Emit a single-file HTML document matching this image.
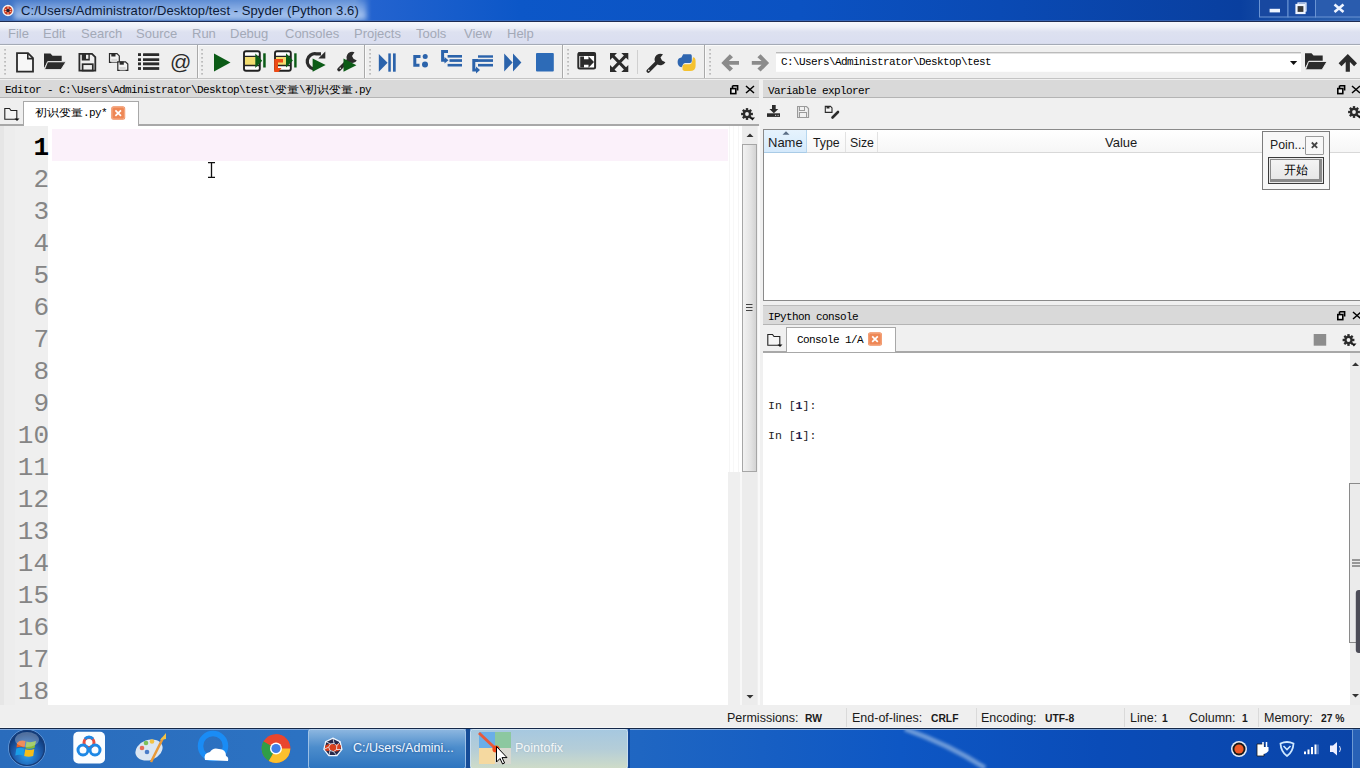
<!DOCTYPE html>
<html><head><meta charset="utf-8">
<style>
*{margin:0;padding:0;box-sizing:border-box}
html,body{width:1360px;height:768px;overflow:hidden;background:#f0f0f0;font-family:"Liberation Sans",sans-serif}
.a{position:absolute}
.mono{font-family:"Liberation Mono",monospace}
.cj{display:inline-block;overflow:hidden;white-space:nowrap;vertical-align:top}
svg{position:absolute;overflow:visible}
</style></head><body>

<!-- TITLE BAR -->
<div class="a" id="title" style="left:0;top:0;width:1360px;height:21px;background:linear-gradient(90deg,#3f74c6 0px,#5586d0 150px,#5e8ed6 355px,#2363cf 372px,#0c57c8 520px,#0b52c2 800px,#0a4ab4 1000px,#093f9f 1240px,#1f55a8 1300px,#2d62b0 1360px)"></div>
<div class="a" style="left:14px;top:1px;width:352px;height:19px;background:linear-gradient(180deg,rgba(140,175,230,0.25) 0,rgba(175,202,242,0.7) 60%,rgba(190,212,245,0.85) 85%,rgba(150,185,235,0.5) 100%);filter:blur(2.5px)"></div>
<div class="a" style="left:0;top:20px;width:1360px;height:1px;background:#4d74b8;opacity:0.6"></div>
<div class="a" style="left:0;top:21px;width:1360px;height:1px;background:#1e2c52"></div>
<svg class="a" style="left:0;top:0" width="1360" height="22">
<circle cx="8" cy="10.5" r="5" fill="#c8381c" stroke="#f4f4f4" stroke-width="1.3"/><path d="M4.5 9 L11.5 12 M11.5 9 L4.5 12 M8 6 V15" stroke="#ffd8c8" stroke-width="0.8"/><circle cx="8" cy="10.5" r="1.8" fill="#2a1a2a"/>
<!-- window buttons -->
<rect x="1259.5" y="-1" width="28.5" height="18" fill="#1848a0" stroke="#6a94d4" stroke-width="1"/>
<rect x="1288" y="-1" width="27.5" height="18" fill="#1a4ca4" stroke="#6a94d4" stroke-width="1"/>
<rect x="1315.5" y="-1" width="45" height="18" fill="#2a5cae" stroke="#6a94d4" stroke-width="1"/>
<rect x="1269.6" y="8.8" width="10.4" height="3.6" fill="#eef4ff"/>
<rect x="1298" y="3" width="8" height="8" fill="none" stroke="#eef4ff" stroke-width="1.2"/>
<rect x="1296.5" y="5" width="8" height="8" fill="#3a3a3a" stroke="#eef4ff" stroke-width="2.2"/>
<path d="M1334.5 4.5 L1343.5 12 M1343.5 4.5 L1334.5 12" stroke="#eef4ff" stroke-width="2.6"/>
</svg>

<!-- MENU BAR -->
<div class="a" id="menubar" style="left:0;top:22px;width:1360px;height:23px;background:linear-gradient(#f6f8fc 0,#eef1f8 5px,#dde1f0 10px,#dadef0 21px,#d4d8e6 22px)"></div>
<div class="a" style="left:0;top:44px;width:1360px;height:1px;background:#a4aab6"></div>

<!-- TOOLBAR -->
<div class="a" id="toolbar" style="left:0;top:45px;width:1360px;height:34px;background:#efefef"></div>
<div class="a" style="left:0;top:45px;width:1360px;height:1px;background:#fbfbfb"></div><div class="a" style="left:0;top:78px;width:1360px;height:1px;background:#c4c4c4"></div>

<!-- EDITOR PANE -->
<div class="a" style="left:0;top:80px;width:759px;height:18px;background:#d9d9d9;border-bottom:1px solid #b4b4b4"></div>
<div class="a" style="left:0;top:99px;width:759px;height:26px;background:#efefef"></div>
<div class="a" style="left:0;top:124px;width:759px;height:2px;background:#a8a8a8"></div>
<div class="a" style="left:0;top:126px;width:742px;height:579px;background:#fff"></div>
<div class="a" style="left:0;top:126px;width:48px;height:579px;background:#efefef"></div>
<div class="a" style="left:4px;top:126px;width:11px;height:579px;background:#ededed"></div><div class="a" style="left:0;top:126px;width:4px;height:579px;background:#e6e6e6"></div>
<div class="a" style="left:52px;top:129px;width:676px;height:31.5px;background:#fbf1fa"></div>
<!-- editor scrollbar -->
<div class="a" style="left:742px;top:126px;width:15px;height:580px;background:#ececec"></div>
<div class="a" style="left:742px;top:144px;width:15px;height:328px;border:1px solid #a6a6a6;background:linear-gradient(90deg,#f2f2f2,#e3e3e3 60%,#d3d3d3)"></div>

<!-- RIGHT PANES -->
<div class="a" style="left:763px;top:80px;width:597px;height:18px;background:#d9d9d9;border-bottom:1px solid #b4b4b4"></div>
<div class="a" style="left:763px;top:129px;width:597px;height:172px;background:#fff;border:1px solid #8a8a8a;border-right:none"></div>
<div class="a" style="left:763px;top:305px;width:597px;height:20px;background:#d9d9d9;border-top:1px solid #bcbcbc;border-bottom:1px solid #b4b4b4"></div>
<div class="a" style="left:763px;top:351px;width:597px;height:2px;background:#a8a8a8"></div>
<div class="a" style="left:763px;top:353px;width:597px;height:353px;background:#fff"></div>
<div class="a" style="left:1350px;top:353px;width:10px;height:353px;background:#ececec"></div>


<!-- scrollbar details -->
<div class="a" style="left:728px;top:472px;width:14px;height:233px;background:#efefef"></div>
<div class="a" style="left:729px;top:126px;width:1px;height:346px;background:#f6f6f6"></div>
<div class="a" style="left:733px;top:126px;width:1px;height:346px;background:#f8f8f8"></div>
<div class="a" style="left:738px;top:126px;width:1px;height:346px;background:#f5f5f5"></div>
<div class="a" style="left:740px;top:472px;width:2px;height:233px;background:#f8f8f8"></div>
<div class="a" style="left:757px;top:126px;width:6px;height:579px;background:#f0f0f0"></div>
<div class="a" style="left:758px;top:126px;width:2px;height:579px;background:#f9f9f9"></div>
<svg class="a" style="left:0;top:0" width="1360" height="768">
<path d="M746.5 137 L750 133.5 L753.5 137 Z" fill="#333"/>
<path d="M746.5 695 L750 698.5 L753.5 695 Z" fill="#333"/>
<path d="M746 304.5 H752.5 M746 307.5 H752.5 M746 310.5 H752.5" stroke="#444" stroke-width="1.2"/>
<!-- console scrollbar -->
<path d="M1352 366 L1355.5 362.5 L1359 366 Z" fill="#333"/>
<path d="M1352 694 L1355.5 697.5 L1359 694 Z" fill="#333"/>
<rect x="1349.5" y="483.5" width="12" height="159" fill="#ebebeb" stroke="#8a8a8a" stroke-width="1"/>
<path d="M1352 560 H1360 M1352 563 H1360 M1352 566 H1360" stroke="#444" stroke-width="1.2"/>
<rect x="1355.8" y="590" width="8" height="63" rx="3" fill="#4d4d58"/>
</svg>

<!-- STATUS BAR -->
<div class="a" style="left:0;top:705px;width:1360px;height:23px;background:#efefef"></div>

<!-- TASKBAR -->
<div class="a" id="taskbar" style="left:0;top:729px;width:1360px;height:39px;background:linear-gradient(90deg,#2a6cbc 0,#2c72c2 300px,#1f66c2 640px,#0e57c4 900px,#0a4cb8 1100px,#0a44a8 1360px)"></div>




<svg class="a" style="left:0;top:0" width="1360" height="768" viewBox="0 0 1360 768">
<rect x="4.25" y="49" width="1.6" height="1.6" fill="#b4b4b4"/><rect x="4.25" y="53" width="1.6" height="1.6" fill="#b4b4b4"/><rect x="4.25" y="57" width="1.6" height="1.6" fill="#b4b4b4"/><rect x="4.25" y="61" width="1.6" height="1.6" fill="#b4b4b4"/><rect x="4.25" y="65" width="1.6" height="1.6" fill="#b4b4b4"/><rect x="4.25" y="69" width="1.6" height="1.6" fill="#b4b4b4"/><rect x="4.25" y="73" width="1.6" height="1.6" fill="#b4b4b4"/><rect x="201.25" y="49" width="1.6" height="1.6" fill="#b4b4b4"/><rect x="201.25" y="53" width="1.6" height="1.6" fill="#b4b4b4"/><rect x="201.25" y="57" width="1.6" height="1.6" fill="#b4b4b4"/><rect x="201.25" y="61" width="1.6" height="1.6" fill="#b4b4b4"/><rect x="201.25" y="65" width="1.6" height="1.6" fill="#b4b4b4"/><rect x="201.25" y="69" width="1.6" height="1.6" fill="#b4b4b4"/><rect x="201.25" y="73" width="1.6" height="1.6" fill="#b4b4b4"/><rect x="369.25" y="49" width="1.6" height="1.6" fill="#b4b4b4"/><rect x="369.25" y="53" width="1.6" height="1.6" fill="#b4b4b4"/><rect x="369.25" y="57" width="1.6" height="1.6" fill="#b4b4b4"/><rect x="369.25" y="61" width="1.6" height="1.6" fill="#b4b4b4"/><rect x="369.25" y="65" width="1.6" height="1.6" fill="#b4b4b4"/><rect x="369.25" y="69" width="1.6" height="1.6" fill="#b4b4b4"/><rect x="369.25" y="73" width="1.6" height="1.6" fill="#b4b4b4"/><rect x="567.25" y="49" width="1.6" height="1.6" fill="#b4b4b4"/><rect x="567.25" y="53" width="1.6" height="1.6" fill="#b4b4b4"/><rect x="567.25" y="57" width="1.6" height="1.6" fill="#b4b4b4"/><rect x="567.25" y="61" width="1.6" height="1.6" fill="#b4b4b4"/><rect x="567.25" y="65" width="1.6" height="1.6" fill="#b4b4b4"/><rect x="567.25" y="69" width="1.6" height="1.6" fill="#b4b4b4"/><rect x="567.25" y="73" width="1.6" height="1.6" fill="#b4b4b4"/><rect x="709.25" y="49" width="1.6" height="1.6" fill="#b4b4b4"/><rect x="709.25" y="53" width="1.6" height="1.6" fill="#b4b4b4"/><rect x="709.25" y="57" width="1.6" height="1.6" fill="#b4b4b4"/><rect x="709.25" y="61" width="1.6" height="1.6" fill="#b4b4b4"/><rect x="709.25" y="65" width="1.6" height="1.6" fill="#b4b4b4"/><rect x="709.25" y="69" width="1.6" height="1.6" fill="#b4b4b4"/><rect x="709.25" y="73" width="1.6" height="1.6" fill="#b4b4b4"/>
<rect x="197" y="45" width="1" height="33" fill="#a9a9a9"/><rect x="198" y="45" width="1" height="33" fill="#fafafa"/><rect x="364" y="45" width="1" height="33" fill="#a9a9a9"/><rect x="365" y="45" width="1" height="33" fill="#fafafa"/><rect x="562" y="45" width="1" height="33" fill="#a9a9a9"/><rect x="563" y="45" width="1" height="33" fill="#fafafa"/><rect x="704" y="45" width="1" height="33" fill="#a9a9a9"/><rect x="705" y="45" width="1" height="33" fill="#fafafa"/>
<rect x="637" y="50" width="1" height="24" fill="#d0d0d0"/>
<!-- new file -->
<path d="M17 53.2 H28 L33 58.2 V71.6 H17 Z" fill="#fff" fill-opacity="0.5" stroke="#2b2b2b" stroke-width="1.8" stroke-linejoin="miter"/>
<path d="M27.8 53.2 V58.6 H33" fill="none" stroke="#2b2b2b" stroke-width="1.6"/>
<!-- open folder -->
<path d="M44 53.5 H50.5 L52.5 55.8 H61.7 V61 H48 L44 68 Z" fill="#2b2b2b"/>
<path d="M47.5 61.8 H66 L61 69.6 H44.5 Z" fill="#2b2b2b" stroke="#efefef" stroke-width="0.9"/>
<!-- save -->
<path d="M79.4 53.9 H92 L95.3 57.2 V70.6 H79.4 Z" fill="none" stroke="#2b2b2b" stroke-width="1.8"/>
<rect x="81.8" y="53.5" width="8" height="7" fill="#2b2b2b"/><rect x="86" y="54.8" width="2.4" height="4" fill="#efefef"/>
<rect x="82.6" y="64.2" width="10.2" height="6.4" fill="none" stroke="#2b2b2b" stroke-width="1.7"/>
<!-- save all -->
<path d="M109.5 53.6 H117 L119.3 55.9 V62.4 H109.5 Z" fill="#f4f4f4" stroke="#2b2b2b" stroke-width="1.2"/>
<rect x="111.3" y="53.3" width="4.2" height="3.2" fill="#2b2b2b"/>
<rect x="111.3" y="58.8" width="6" height="3.6" fill="#d8d8d8"/>
<path d="M117.8 61.8 H125.5 L127.8 64.1 V70.4 H117.8 Z" fill="#f4f4f4" stroke="#2b2b2b" stroke-width="1.2"/>
<rect x="119.6" y="61.5" width="4.2" height="3.2" fill="#2b2b2b"/>
<rect x="119.6" y="67" width="6" height="3.4" fill="#d8d8d8"/>
<!-- list -->
<rect x="138" y="53.2" width="3" height="2.8" fill="#2b2b2b"/><rect x="143" y="53.2" width="16.2" height="2.8" fill="#2b2b2b" rx="0.5"/>
<rect x="138" y="58.3" width="3" height="2.7" fill="#2b2b2b"/><rect x="143" y="58.3" width="16.2" height="2.7" fill="#2b2b2b"/>
<rect x="138" y="62.4" width="3" height="2.9" fill="#2b2b2b"/><rect x="143" y="62.4" width="16.2" height="2.9" fill="#2b2b2b"/>
<rect x="138" y="67.1" width="3" height="2.8" fill="#2b2b2b"/><rect x="143" y="67.1" width="16.2" height="2.8" fill="#2b2b2b"/>
<!-- @ -->
<text x="170" y="69" font-family="Liberation Sans" font-size="21" fill="#2b2b2b">@</text>
<!-- run -->
<path d="M214 53.6 L230.5 62.5 L214 71.5 Z" fill="#0b5b16"/>
<!-- run cell -->
<rect x="244" y="51.2" width="15.8" height="19.6" rx="2" fill="#fff" stroke="#222" stroke-width="1.9"/>
<rect x="245" y="57" width="11" height="8" fill="#f2dd70"/>
<path d="M244 56.4 H259.8 M244 65.5 H259.8" stroke="#222" stroke-width="1.4"/>
<path d="M255.3 53.6 L262.2 60.7 L255.3 67.9 Z" fill="#0b5b16"/>
<rect x="263.2" y="53.3" width="2.5" height="14.2" fill="#0b5b16"/>
<!-- run cell advance -->
<rect x="275" y="51.2" width="15.8" height="19.6" rx="2" fill="#fff" stroke="#222" stroke-width="1.9"/>
<rect x="276" y="57" width="11" height="8" fill="#f2dd70"/>
<path d="M275 56.4 H290.8 M275 65.5 H290.8" stroke="#222" stroke-width="1.4"/>
<path d="M274.2 59 H283 V62.4 H278 V68 H281.5 L278.5 72 H274.2 Z" fill="#ee4a14"/>
<path d="M286 53.3 L292.9 60.4 L286 67.5 Z" fill="#0b5b16"/>
<rect x="294.2" y="53.3" width="2.4" height="14.2" fill="#0b5b16"/>
<!-- rerun -->
<path d="M321 53.8 H316.2 A7.6 7.6 0 0 0 313.5 68.8" fill="none" stroke="#2b2b2b" stroke-width="3.3"/>
<path d="M325.3 51.6 V58.6 H318.3 Z" fill="#2b2b2b"/>
<path d="M312.6 58.4 L325.6 65.1 L312.6 71.8 Z" fill="#0b5b16"/>
<!-- run selection -->
<path d="M339 69.5 L347.5 61" stroke="#2b2b2b" stroke-width="3.6" stroke-linecap="round"/>
<circle cx="340.3" cy="68.2" r="0.8" fill="#e8e8e8"/>
<path d="M354.5 52.3 A5.6 5.6 0 1 0 356.8 60.5 L353.5 58.8 L352 56 Z" fill="#2b2b2b"/>
<path d="M343.5 58.6 L356.4 65.2 L343.5 71.8 Z" fill="#0b5b16"/>
<!-- debug -->
<path d="M378.8 54 L387.6 62.85 L378.8 71.7 Z" fill="#2b63ab"/>
<rect x="388.3" y="53.4" width="2.5" height="18.3" fill="#2b63ab"/><rect x="393" y="53.4" width="2.7" height="18.3" fill="#2b63ab"/>
<!-- step -->
<path d="M420.5 56.6 H414.8 V65.2 H419.5" fill="none" stroke="#2b63ab" stroke-width="3"/>
<circle cx="425.2" cy="56.6" r="2.5" fill="#2b63ab"/><circle cx="425" cy="64.6" r="3" fill="#2b63ab"/>
<!-- step into -->
<path d="M448 51.5 H442.6 V60.3 H445" fill="none" stroke="#2b63ab" stroke-width="3"/>
<path d="M444.5 57 L448.5 60.3 L444.5 63.6 Z" fill="#2b63ab"/>
<rect x="447.6" y="55" width="14.4" height="2.6" fill="#2b63ab"/><rect x="449.5" y="59.2" width="12.5" height="2.7" fill="#2b63ab"/><rect x="447.6" y="63.9" width="14.4" height="2.6" fill="#2b63ab"/>
<!-- step return -->
<rect x="478" y="55.3" width="15" height="2.4" fill="#2b63ab"/><rect x="478" y="59.2" width="15" height="2.7" fill="#2b63ab"/><rect x="478" y="63.9" width="15" height="2.6" fill="#2b63ab"/>
<path d="M478 60.5 H473.8 V70 H476.5" fill="none" stroke="#2b63ab" stroke-width="3"/>
<path d="M476 66.5 L480 70 L476 73.5 Z" fill="#2b63ab"/>
<!-- continue -->
<path d="M504.2 53.6 L512.6 62.5 L504.2 71.5 Z M513 53.6 L521.4 62.5 L513 71.5 Z" fill="#2b63ab"/>
<!-- stop -->
<rect x="536" y="53" width="17.8" height="18.5" rx="1" fill="#2d6bb7"/>
<!-- maximize pane -->
<rect x="578.3" y="53" width="16.8" height="15.6" rx="1.5" fill="#fff" stroke="#2b2b2b" stroke-width="2"/>
<rect x="578" y="52.5" width="17.5" height="3.5" fill="#2b2b2b"/>
<rect x="580.2" y="56.5" width="3.8" height="11" fill="#2b2b2b"/>
<path d="M584 59.3 H588.5 V56.3 L594 62 L588.5 67.7 V64.7 H584 Z" fill="#2b2b2b"/>
<!-- fullscreen -->
<path d="M612.5 55.5 L626 69.5 M626 55.5 L612.5 69.5" stroke="#2b2b2b" stroke-width="3.2"/>
<path d="M610 53 H617 L610 60 Z M628.3 53 H621.3 L628.3 60 Z M610 72 H617 L610 65 Z M628.3 72 H621.3 L628.3 65 Z" fill="#2b2b2b"/>
<!-- wrench -->
<path d="M648.3 71 L656.8 62.5" stroke="#2b2b2b" stroke-width="3.8" stroke-linecap="round"/>
<path d="M663 54.3 A5.8 5.8 0 1 0 665.4 62.3 L662 60.6 L660.5 57.6 Z" fill="#2b2b2b"/>
<circle cx="648.8" cy="70.4" r="0.8" fill="#e8e8e8"/>
<!-- python -->
<path d="M686 71 H690 Q695.6 71 695.6 66 V61 Q695.6 57.6 693 57.3 L692 62 Q691.5 64.2 689.5 64.2 H684.5 Q683 64.2 682.5 65.7 V69 Q682.5 71 686 71 Z" fill="#f5c230"/>
<path d="M683.2 54.2 H690.6 Q691.8 54.2 691.8 56 V61 Q691.8 63 689.8 63 H685 Q683.6 63 683 64.5 L681.6 67.2 Q677.6 66.6 677.6 62 Q677.6 57.8 681.4 57.4 Z" fill="#2f66b0"/>
<!-- back/forward -->
<path d="M721.3 62.9 L729.8 54.2 L733 57.3 L728.8 61 H739 V64.8 H728.8 L733 68.5 L729.8 71.6 Z" fill="#8b8b8b"/>
<path d="M769.1 62.9 L760.6 54.2 L757.4 57.3 L761.6 61 H751.8 V64.8 H761.6 L757.4 68.5 L760.6 71.6 Z" fill="#8b8b8b"/>
<!-- combobox -->
<rect x="776" y="52.3" width="525" height="19.5" fill="#fff"/>
<rect x="776" y="52.3" width="525" height="1" fill="#a0a0a0"/>
<path d="M1290 61 H1297.2 L1293.6 65 Z" fill="#111"/>
<!-- folder right -->
<path d="M1305 53.2 H1311.5 L1313.5 55.5 H1322.7 V60.7 H1309 L1305 67.7 Z" fill="#2b2b2b"/>
<path d="M1308.5 61.5 H1327 L1322 69.8 H1305.5 Z" fill="#2b2b2b" stroke="#efefef" stroke-width="0.9"/>
<!-- up arrow -->
<path d="M1347.8 54 L1357 63.3 L1354.1 66.2 L1349.9 62 V71.8 H1345.7 V62 L1341.5 66.2 L1338.6 63.3 Z" fill="#2b2b2b"/>
</svg>


<svg class="a" style="left:0;top:0" width="1360" height="768" viewBox="0 0 1360 768">
<!-- pane header icons -->
<path d="M732.5 85.8 H737.6 V90.5 M732.5 85.8 V88" fill="none" stroke="#000" stroke-width="1.6"/><rect x="730.8" y="88.6" width="5" height="5" fill="#eee" stroke="#000" stroke-width="1.6"/><path d="M746 86 L754 93 M754 86 L746 93" stroke="#000" stroke-width="1.5"/>
<path d="M1339.5 85.8 H1344.6 V90.5 M1339.5 85.8 V88" fill="none" stroke="#000" stroke-width="1.6"/><rect x="1337.8" y="88.6" width="5" height="5" fill="#eee" stroke="#000" stroke-width="1.6"/><path d="M1352 86 L1360 93 M1360 86 L1352 93" stroke="#000" stroke-width="1.5"/>
<path d="M1339.5 311.8 H1344.6 V316.5 M1339.5 311.8 V314" fill="none" stroke="#000" stroke-width="1.6"/><rect x="1337.8" y="314.6" width="5" height="5" fill="#eee" stroke="#000" stroke-width="1.6"/><path d="M1353 312 L1361 319 M1361 312 L1353 319" stroke="#000" stroke-width="1.5"/>
<!-- gears -->
<circle cx="747" cy="114" r="4.2" fill="#2b2b2b"/><line x1="747" y1="114" x2="752.90" y2="114.00" stroke="#2b2b2b" stroke-width="2.4"/><line x1="747" y1="114" x2="751.17" y2="118.17" stroke="#2b2b2b" stroke-width="2.4"/><line x1="747" y1="114" x2="747.00" y2="119.90" stroke="#2b2b2b" stroke-width="2.4"/><line x1="747" y1="114" x2="742.83" y2="118.17" stroke="#2b2b2b" stroke-width="2.4"/><line x1="747" y1="114" x2="741.10" y2="114.00" stroke="#2b2b2b" stroke-width="2.4"/><line x1="747" y1="114" x2="742.83" y2="109.83" stroke="#2b2b2b" stroke-width="2.4"/><line x1="747" y1="114" x2="747.00" y2="108.10" stroke="#2b2b2b" stroke-width="2.4"/><line x1="747" y1="114" x2="751.17" y2="109.83" stroke="#2b2b2b" stroke-width="2.4"/><circle cx="747" cy="114" r="1.9" fill="#efefef"/><path d="M749.8 117.6 H755 L752.4 120.6 Z" fill="#111"/><circle cx="1354" cy="112" r="4.2" fill="#2b2b2b"/><line x1="1354" y1="112" x2="1359.90" y2="112.00" stroke="#2b2b2b" stroke-width="2.4"/><line x1="1354" y1="112" x2="1358.17" y2="116.17" stroke="#2b2b2b" stroke-width="2.4"/><line x1="1354" y1="112" x2="1354.00" y2="117.90" stroke="#2b2b2b" stroke-width="2.4"/><line x1="1354" y1="112" x2="1349.83" y2="116.17" stroke="#2b2b2b" stroke-width="2.4"/><line x1="1354" y1="112" x2="1348.10" y2="112.00" stroke="#2b2b2b" stroke-width="2.4"/><line x1="1354" y1="112" x2="1349.83" y2="107.83" stroke="#2b2b2b" stroke-width="2.4"/><line x1="1354" y1="112" x2="1354.00" y2="106.10" stroke="#2b2b2b" stroke-width="2.4"/><line x1="1354" y1="112" x2="1358.17" y2="107.83" stroke="#2b2b2b" stroke-width="2.4"/><circle cx="1354" cy="112" r="1.9" fill="#efefef"/><path d="M1356.8 115.6 H1362 L1359.4 118.6 Z" fill="#111"/><circle cx="1348.5" cy="340" r="4.2" fill="#2b2b2b"/><line x1="1348.5" y1="340" x2="1354.40" y2="340.00" stroke="#2b2b2b" stroke-width="2.4"/><line x1="1348.5" y1="340" x2="1352.67" y2="344.17" stroke="#2b2b2b" stroke-width="2.4"/><line x1="1348.5" y1="340" x2="1348.50" y2="345.90" stroke="#2b2b2b" stroke-width="2.4"/><line x1="1348.5" y1="340" x2="1344.33" y2="344.17" stroke="#2b2b2b" stroke-width="2.4"/><line x1="1348.5" y1="340" x2="1342.60" y2="340.00" stroke="#2b2b2b" stroke-width="2.4"/><line x1="1348.5" y1="340" x2="1344.33" y2="335.83" stroke="#2b2b2b" stroke-width="2.4"/><line x1="1348.5" y1="340" x2="1348.50" y2="334.10" stroke="#2b2b2b" stroke-width="2.4"/><line x1="1348.5" y1="340" x2="1352.67" y2="335.83" stroke="#2b2b2b" stroke-width="2.4"/><circle cx="1348.5" cy="340" r="1.9" fill="#efefef"/><path d="M1351.3 343.6 H1356.5 L1353.9 346.6 Z" fill="#111"/>
<!-- tab folders -->
<path d="M4.8 108.5 H9.5 L11 110.5 H16.8 V119.3 H4.8 Z" fill="#f4f4f4" stroke="#222" stroke-width="1.1"/><path d="M14.5 118.5 H19.5 L17 121.1 Z" fill="#111"/><path d="M767.8 334.5 H772.5 L774 336.5 H779.8 V345.3 H767.8 Z" fill="#f4f4f4" stroke="#222" stroke-width="1.1"/><path d="M777.5 344.5 H782.5 L780 347.1 Z" fill="#111"/>
<!-- console stop -->
<rect x="1313.7" y="334" width="12.5" height="11.7" fill="#8d8d8d"/>
<!-- var explorer toolbar -->
<path d="M772 105 H775.7 V109 H778.3 L773.85 113.2 L769.4 109 H772 Z" fill="#2b2b2b"/>
<rect x="767" y="113.3" width="13" height="3.6" fill="#2b2b2b"/>
<rect x="775" y="114.8" width="1.2" height="1.2" fill="#bbb"/><rect x="777.5" y="114.8" width="1.2" height="1.2" fill="#bbb"/>
<path d="M797.6 106.5 H806.5 L808.5 108.5 V117.5 H797.6 Z" fill="none" stroke="#9a9a9a" stroke-width="1.2"/>
<rect x="799.5" y="106.5" width="5" height="4" fill="none" stroke="#9a9a9a" stroke-width="1"/>
<rect x="799.5" y="112.5" width="7" height="5" fill="none" stroke="#9a9a9a" stroke-width="1"/>
<path d="M825.3 106.4 H830.5 L832 107.9 V112.4 H825.3 Z" fill="#f4f4f4" stroke="#2b2b2b" stroke-width="1.1"/>
<rect x="826.5" y="106" width="3" height="2.5" fill="#2b2b2b"/>
<path d="M832.5 117.5 L838 112" stroke="#2b2b2b" stroke-width="2.6" stroke-linecap="round"/>
</svg>

<!-- TEXT LAYER -->
<div class="a" style="left:21px;top:4px;font-size:13px;line-height:13px;color:#0c1a36;white-space:nowrap;letter-spacing:0.07px">C:/Users/Administrator/Desktop/test - Spyder (Python 3.6)</div>

<div class="a" id="menu" style="left:0;top:27px;font-size:13px;line-height:13px;color:#a3a9b7;white-space:nowrap">
<span class="a" style="left:8px">File</span><span class="a" style="left:43px">Edit</span><span class="a" style="left:81px">Search</span><span class="a" style="left:136px">Source</span><span class="a" style="left:192px">Run</span><span class="a" style="left:230px">Debug</span><span class="a" style="left:285px">Consoles</span><span class="a" style="left:354px">Projects</span><span class="a" style="left:416px">Tools</span><span class="a" style="left:464px">View</span><span class="a" style="left:507px">Help</span>
</div>

<div class="a mono" style="left:5px;top:85px;font-size:11px;line-height:11px;letter-spacing:-0.6px;color:#000;white-space:nowrap">Editor - C:\Users\Administrator\Desktop\test\<span class="cj" style="width:24px;font-size:12px;letter-spacing:0">变量</span>\<span class="cj" style="width:48px;font-size:12px;letter-spacing:0">初识变量</span>.py</div>

<div class="a mono" style="left:768px;top:86px;font-size:11px;line-height:11px;letter-spacing:-0.6px;color:#000;white-space:nowrap">Variable explorer</div>
<div class="a mono" style="left:768px;top:312px;font-size:11px;line-height:11px;letter-spacing:-0.6px;color:#000;white-space:nowrap">IPython console</div>

<!-- status bar text -->
<div class="a" style="left:0;top:712px;font-size:12.5px;line-height:12.5px;color:#1a1a1a;white-space:nowrap">
<span class="a" style="left:727px">Permissions:</span><span class="a" style="left:805px;font-weight:bold;font-size:10.3px;top:0.5px">RW</span>
<span class="a" style="left:852px">End-of-lines:</span><span class="a" style="left:931px;font-weight:bold;font-size:10.3px;top:0.5px">CRLF</span>
<span class="a" style="left:981px">Encoding:</span><span class="a" style="left:1045px;font-weight:bold;font-size:10.3px;top:0.5px">UTF-8</span>
<span class="a" style="left:1130px">Line:</span><span class="a" style="left:1162px;font-weight:bold;font-size:10.3px;top:0.5px">1</span>
<span class="a" style="left:1189px">Column:</span><span class="a" style="left:1242px;font-weight:bold;font-size:10.3px;top:0.5px">1</span>
<span class="a" style="left:1264px">Memory:</span><span class="a" style="left:1321px;font-weight:bold;font-size:10.3px;top:0.5px">27 %</span>
</div>

<!-- line numbers -->
<div class="a mono" style="left:0;width:49px;text-align:right;top:131.6px;font-size:26px;line-height:32px;font-weight:bold;color:#000">1</div><div class="a mono" style="left:0;width:49px;text-align:right;top:163.6px;font-size:26px;line-height:32px;color:#858585">2</div><div class="a mono" style="left:0;width:49px;text-align:right;top:195.6px;font-size:26px;line-height:32px;color:#858585">3</div><div class="a mono" style="left:0;width:49px;text-align:right;top:227.6px;font-size:26px;line-height:32px;color:#858585">4</div><div class="a mono" style="left:0;width:49px;text-align:right;top:259.6px;font-size:26px;line-height:32px;color:#858585">5</div><div class="a mono" style="left:0;width:49px;text-align:right;top:291.6px;font-size:26px;line-height:32px;color:#858585">6</div><div class="a mono" style="left:0;width:49px;text-align:right;top:323.6px;font-size:26px;line-height:32px;color:#858585">7</div><div class="a mono" style="left:0;width:49px;text-align:right;top:355.6px;font-size:26px;line-height:32px;color:#858585">8</div><div class="a mono" style="left:0;width:49px;text-align:right;top:387.6px;font-size:26px;line-height:32px;color:#858585">9</div><div class="a mono" style="left:0;width:49px;text-align:right;top:419.6px;font-size:26px;line-height:32px;color:#858585">10</div><div class="a mono" style="left:0;width:49px;text-align:right;top:451.6px;font-size:26px;line-height:32px;color:#858585">11</div><div class="a mono" style="left:0;width:49px;text-align:right;top:483.6px;font-size:26px;line-height:32px;color:#858585">12</div><div class="a mono" style="left:0;width:49px;text-align:right;top:515.6px;font-size:26px;line-height:32px;color:#858585">13</div><div class="a mono" style="left:0;width:49px;text-align:right;top:547.6px;font-size:26px;line-height:32px;color:#858585">14</div><div class="a mono" style="left:0;width:49px;text-align:right;top:579.6px;font-size:26px;line-height:32px;color:#858585">15</div><div class="a mono" style="left:0;width:49px;text-align:right;top:611.6px;font-size:26px;line-height:32px;color:#858585">16</div><div class="a mono" style="left:0;width:49px;text-align:right;top:643.6px;font-size:26px;line-height:32px;color:#858585">17</div><div class="a mono" style="left:0;width:49px;text-align:right;top:675.6px;font-size:26px;line-height:32px;color:#858585">18</div>
<!-- mouse I-beam -->
<svg class="a" style="left:0;top:0" width="1360" height="768"><path d="M208 162.6 H215 M208 177.4 H215 M211.5 162.6 V177.4" fill="none" stroke="#111" stroke-width="1.3"/></svg>

<!-- editor tab -->
<div class="a" style="left:23px;top:101px;width:116px;height:25px;background:#fff;border:1px solid #a8a8a8;border-bottom:none"></div>
<div class="a mono" style="left:35px;top:108px;font-size:11px;line-height:11px;letter-spacing:-0.6px;color:#000;white-space:nowrap"><span class="cj" style="width:48px;font-size:12px;letter-spacing:0">初识变量</span>.py*</div>

<!-- console tab -->
<div class="a" style="left:786px;top:327px;width:110px;height:25px;background:#fff;border:1px solid #a8a8a8;border-bottom:none"></div>
<div class="a mono" style="left:797px;top:335px;font-size:11px;line-height:11px;letter-spacing:-0.6px;color:#000;white-space:nowrap">Console 1/A</div>

<!-- var table header -->
<div class="a" style="left:764px;top:130px;width:596px;height:23px;background:linear-gradient(#ffffff,#f6f6f6);border-bottom:1px solid #d8d8d8"></div>
<div class="a" style="left:764px;top:130px;width:43px;height:23px;background:linear-gradient(#e6f3fd,#d4e9fb);border-right:1px solid #b6d6ee;border-bottom:1px solid #a9cbe6"></div>
<div class="a" style="left:845px;top:132px;width:1px;height:20px;background:#e2e2e2"></div>
<div class="a" style="left:877px;top:132px;width:1px;height:20px;background:#e2e2e2"></div>
<svg class="a" style="left:0;top:0" width="1360" height="768"><path d="M782.5 134.8 L786 131.3 L789.5 134.8 Z" fill="#5a6e86"/></svg>
<div class="a" style="left:0;top:136px;font-size:13px;line-height:13px;color:#1a1a1a;white-space:nowrap">
<span class="a" style="left:768px">Name</span><span class="a" style="left:813px;top:0.8px;font-size:12.3px">Type</span><span class="a" style="left:850px;top:0.8px;font-size:12.3px">Size</span><span class="a" style="left:1105px">Value</span>
</div>

<!-- pointofix popup -->
<div class="a" style="left:1262px;top:131px;width:68px;height:59px;background:#f7f7f7;border:1px solid #7c7c7c"></div>
<div class="a" style="left:1270px;top:139px;font-size:12.3px;line-height:13px;color:#222;white-space:nowrap">Poin...</div>
<div class="a" style="left:1305px;top:136px;width:19px;height:19px;border:1px solid #9a9a9a;border-radius:1px;background:#f8f8f8"></div>
<svg class="a" style="left:0;top:0" width="1360" height="768"><path d="M1311.8 142.5 L1317.2 147.8 M1317.2 142.5 L1311.8 147.8" stroke="#444" stroke-width="1.8"/></svg>
<div class="a" style="left:1268px;top:157px;width:56px;height:27px;border:1px solid #3a3a3a;background:#e8e8e8"></div>
<div class="a" style="left:1270px;top:159px;width:52px;height:23px;border:1px solid #8a8a8a;background:linear-gradient(#f4f4f4,#e6e6e6);box-shadow:inset -2px -2px 0 #8a8a8a"></div>
<div class="a" style="left:1284px;top:164px;font-size:12px;line-height:13px;color:#000;white-space:nowrap"><span class="cj" style="width:24px">开始</span></div>

<!-- console text -->
<div class="a mono" style="left:768px;top:398.5px;font-size:11.5px;line-height:13px;color:#222;white-space:nowrap">In [<b style="color:#1c1c4c">1</b>]:</div>
<div class="a mono" style="left:768px;top:428.5px;font-size:11.5px;line-height:13px;color:#222;white-space:nowrap">In [<b style="color:#1c1c4c">1</b>]:</div>

<!-- status separators -->
<div class="a" style="left:846px;top:708px;width:1px;height:19px;background:#dadada"></div>
<div class="a" style="left:976px;top:708px;width:1px;height:19px;background:#dadada"></div>
<div class="a" style="left:1124px;top:708px;width:1px;height:19px;background:#dadada"></div>
<div class="a" style="left:1258px;top:708px;width:1px;height:19px;background:#dadada"></div>

<!-- combobox text -->
<div class="a mono" style="left:781px;top:57px;font-size:11px;line-height:11px;letter-spacing:-0.6px;color:#000;white-space:nowrap">C:\Users\Administrator\Desktop\test</div>

<svg class="a" style="left:0;top:0" width="1360" height="768"><rect x="111.2" y="106.3" width="14" height="13.5" rx="2.5" fill="#ee8755"/><rect x="112.0" y="107.1" width="12.4" height="11.9" rx="2" fill="none" stroke="#f7b593" stroke-width="0.8"/><path d="M115.4 110.3 L121.0 115.8 M121.0 110.3 L115.4 115.8" stroke="#fff" stroke-width="1.7"/><rect x="868" y="332.3" width="14" height="13.5" rx="2.5" fill="#ee8755"/><rect x="868.8" y="333.1" width="12.4" height="11.9" rx="2" fill="none" stroke="#f7b593" stroke-width="0.8"/><path d="M872.2 336.3 L877.8 341.8 M877.8 336.3 L872.2 341.8" stroke="#fff" stroke-width="1.7"/></svg>

<!-- TASKBAR CONTENT -->
<svg class="a" style="left:0;top:0;filter:blur(1.5px)" width="1360" height="768"><path d="M905 729 Q950 745 985 768" fill="none" stroke="#b0cbea" stroke-opacity="0.6" stroke-width="5"/></svg>

<div class="a" style="left:0;top:727px;width:1360px;height:1px;background:#f6f6f6"></div><div class="a" style="left:0;top:728px;width:1360px;height:1px;background:#152848"></div>
<div class="a" style="left:0;top:729px;width:1360px;height:1px;background:#7da6dc"></div>
<svg class="a" style="left:0;top:0" width="1360" height="768">
<defs>
<radialGradient id="orb" cx="0.5" cy="0.7" r="0.6"><stop offset="0" stop-color="#2aa0f0"/><stop offset="0.6" stop-color="#1f5fb0"/><stop offset="1" stop-color="#0f3a7a"/></radialGradient>
<linearGradient id="tbbtn" x1="0" y1="0" x2="0" y2="1"><stop offset="0" stop-color="#8db7e0"/><stop offset="0.45" stop-color="#4d8dcc"/><stop offset="1" stop-color="#2c74bf"/></linearGradient>
<linearGradient id="tbbtn2" x1="0" y1="0" x2="0" y2="1"><stop offset="0" stop-color="#a6c8e0"/><stop offset="0.5" stop-color="#b4cdd8"/><stop offset="1" stop-color="#cfdcc8"/></linearGradient>
</defs>
<!-- start orb -->
<circle cx="27" cy="748" r="18.5" fill="none" stroke="#7aa8e0" stroke-width="1" opacity="0.7"/>
<circle cx="27" cy="748" r="17.5" fill="url(#orb)" stroke="#173c78" stroke-width="1.2"/>
<path d="M17 743 Q20 739.5 25.5 741 L24.5 747.5 Q20.5 746 16.5 747.5 Z" fill="#e8621e"/>
<path d="M26.5 741.5 Q30.5 743 36 741 L34.5 748 Q30.5 749.5 25.5 748.3 Z" fill="#86bb3a"/>
<path d="M16.3 748.5 Q20.3 747 24.3 748.7 L23.2 755.5 Q19.3 754 15.3 755.5 Z" fill="#1a9ee6"/>
<path d="M25.3 749.3 Q29.5 750.7 34.3 749 L33.2 756 Q28.7 757.5 24.2 756 Z" fill="#f6bd18"/>
<ellipse cx="27" cy="739.5" rx="12" ry="7.5" fill="#ffffff" opacity="0.28"/>
<!-- baidu -->
<rect x="73.3" y="731.7" width="31.7" height="31.8" rx="5" fill="#fbfdff"/>
<circle cx="89" cy="742.5" r="5" fill="none" stroke="#ea4f3f" stroke-width="3"/>
<circle cx="83" cy="750" r="5" fill="none" stroke="#1e88e5" stroke-width="3"/>
<circle cx="95" cy="750" r="5" fill="none" stroke="#1e88e5" stroke-width="3"/>
<path d="M85 739 A5 5 0 0 1 93 739" fill="none" stroke="#1e88e5" stroke-width="3"/>
<!-- paint -->
<ellipse cx="149" cy="750" rx="14" ry="10" fill="#dbe6f2" transform="rotate(-20 149 750)"/>
<circle cx="142" cy="748" r="2.3" fill="#e56b5a"/><circle cx="146" cy="743" r="2.3" fill="#7cbf5a"/><circle cx="152" cy="741.5" r="2.3" fill="#f2c244"/><circle cx="147" cy="752" r="2.3" fill="#4a7cc8"/>
<path d="M151 762 L163 738" stroke="#e89a3a" stroke-width="2.5"/><path d="M160 740 L166 733 L166 739 Z" fill="#f2c244"/>
<!-- qq browser -->
<circle cx="213" cy="746" r="12.5" fill="none" stroke="#1a8cf5" stroke-width="5.5"/>
<path d="M205 760 Q203 753 210 752 Q213 747 219 749 Q226 749 226 756 Q229 757 228 761 Z" fill="#fff"/>
<!-- chrome -->
<circle cx="276" cy="748.5" r="14.3" fill="#e9462f"/>
<path d="M276 748.5 L263.6 741.3 A14.3 14.3 0 0 0 268.8 760.9 Z" fill="#2f9e48"/>
<path d="M276 748.5 L268.8 760.9 A14.3 14.3 0 0 0 290.3 748.5 L283.2 744 Z" fill="#fbc02d"/>
<path d="M276 748.5 L290.3 748.5 A14.3 14.3 0 0 0 276 734.2 L263.6 741.3 Z" fill="#e9462f"/>
<circle cx="276" cy="748.5" r="6" fill="#fff"/><circle cx="276" cy="748.5" r="4.6" fill="#3f7fe8"/>
<!-- task buttons -->
<rect x="308.5" y="729.5" width="157" height="39" rx="2" fill="url(#tbbtn)" stroke="#c4dcf2" stroke-opacity="0.7" stroke-width="1"/>
<rect x="466" y="729" width="4" height="39" fill="#154c98"/>
<rect x="470.5" y="729.5" width="157" height="39" rx="2" fill="url(#tbbtn2)" stroke="#e0eef8" stroke-opacity="0.8" stroke-width="1"/>
<rect x="628" y="729" width="2" height="39" fill="#12489a"/>
<!-- spyder icon -->
<polygon points="332.9,738.2 340.1,741.7 341.9,749.4 336.9,755.7 328.9,755.7 323.9,749.4 325.7,741.7" fill="#25284a" stroke="#f0f6ff" stroke-width="1.3"/>
<path d="M325 746 Q330 742 335 745 Q339 742 341 746 L340 750 Q335 753 331 750 Q327 752 325 750 Z" fill="#d8401c"/>
<g stroke="#f0f6ff" stroke-width="0.8" fill="none"><polygon points="334.1,743.4 336.8,745.9 336.5,749.5 333.5,751.6 330.0,750.5 328.7,747.1 330.5,743.9"/><line x1="334.1" y1="743.4" x2="332.9" y2="738.2"/><line x1="336.8" y1="745.9" x2="340.1" y2="741.7"/><line x1="336.5" y1="749.5" x2="341.9" y2="749.4"/><line x1="333.5" y1="751.6" x2="336.9" y2="755.7"/><line x1="330.0" y1="750.5" x2="328.9" y2="755.7"/><line x1="328.7" y1="747.1" x2="323.9" y2="749.4"/><line x1="330.5" y1="743.9" x2="325.7" y2="741.7"/></g>
<!-- pointofix icon -->
<rect x="479" y="732" width="32" height="32" fill="#f5d9a0"/>
<rect x="479" y="732" width="16" height="16" fill="#6aaee8"/>
<rect x="495" y="732" width="16" height="16" fill="#8cc8a0"/>
<rect x="495" y="748" width="16" height="16" fill="#d8d8d0"/>
<path d="M479 733 L496 749" stroke="#e85a3a" stroke-width="3"/>
<circle cx="496" cy="749" r="3.6" fill="#f04a1a"/>
<!-- mouse cursor -->
<path d="M496.5 746.5 V762 L500 758.5 L502.6 764 L504.6 763 L502 757.6 H507 Z" fill="#fff" stroke="#000" stroke-width="1"/>
<!-- tray -->
<circle cx="1239" cy="749" r="8" fill="#e8eef8"/><circle cx="1239" cy="749" r="6.5" fill="#1a1a1a"/><circle cx="1239" cy="749" r="4.6" fill="#f05a28"/>
<path d="M1257 744 H1264 V756 H1257 Z" fill="#fff" stroke="#1a1a1a" stroke-width="0.8"/>
<path d="M1261 747 H1268.5 V751 Q1266 754 1264 754 Q1261 754 1261 751 Z" fill="#fff"/><path d="M1263 742 V747 M1266.5 742 V747" stroke="#fff" stroke-width="1.5"/>
<path d="M1280.5 743.5 Q1287 740.5 1293.5 743.5 Q1293 752 1287 756 Q1281 752 1280.5 743.5 Z" fill="none" stroke="#cfe8ff" stroke-width="1.8"/>
<path d="M1283.5 746 L1287 749.5 L1290.5 746" fill="none" stroke="#cfe8ff" stroke-width="1.6"/>
<rect x="1304" y="751.5" width="2" height="2.7" fill="#fff"/><rect x="1307.5" y="749.5" width="2" height="4.7" fill="#fff"/><rect x="1311" y="747" width="2" height="7.2" fill="#fff"/><rect x="1314.5" y="744.5" width="2" height="9.7" fill="#fff"/><rect x="1317.5" y="744.5" width="1" height="9.7" fill="#8aa8d8"/>
<path d="M1330 745.5 H1333 L1337 742 V755.5 L1333 752 H1330 Z" fill="#eef" /><path d="M1339.5 746 Q1341.5 749 1339.5 752" fill="none" stroke="#dde" stroke-width="1"/>
<rect x="1352" y="729" width="8" height="39" fill="#3c74c0" opacity="0.6"/>
<rect x="1352" y="729" width="1" height="39" fill="#8ab0e0" opacity="0.7"/>
</svg>
<div class="a" style="left:353px;top:742px;font-size:12.5px;line-height:13px;color:#f2f8ff;white-space:nowrap;text-shadow:0 0 3px #1a4a8a">C:/Users/Admini...</div>
<div class="a" style="left:515px;top:742px;font-size:12.5px;line-height:13px;color:#f4f8f8;white-space:nowrap;text-shadow:0 0 2px #9ab0c0">Pointofix</div>
</body></html>
